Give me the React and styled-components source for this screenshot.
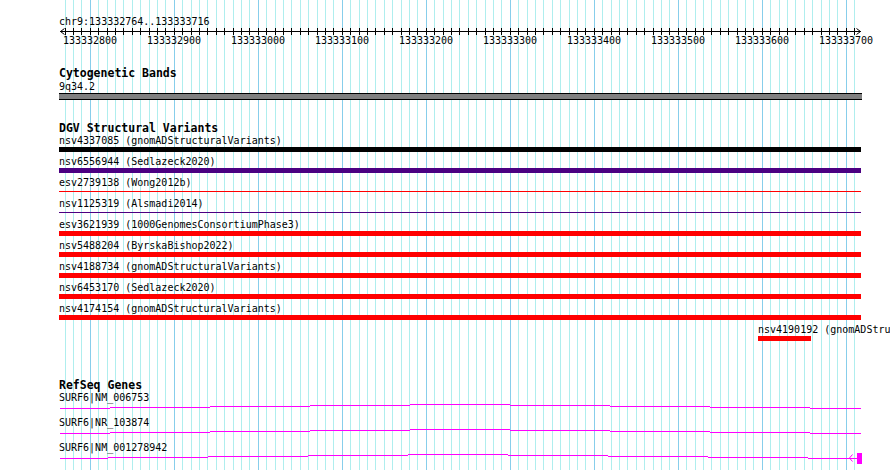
import React from 'react';
import styled, { createGlobalStyle } from 'styled-components';

const GlobalStyle = createGlobalStyle`
  html, body {
    margin: 0;
    padding: 0;
    background: #fff;
  }
  body {
    font-family: "DejaVu Sans Mono", "Liberation Mono", monospace;
    color: #000;
  }
`;

// view window and scale (px per bp)
const VIEW_START = 133332764;
const VIEW_END = 133333716;
const LEFT = 60;
const SCALE = 0.84;
const MIN_X = 59;
const MAX_X = 861;

const toX = (bp) => LEFT + (bp - VIEW_START) * SCALE;
const clampX = (x) => Math.min(MAX_X, Math.max(MIN_X, x));

const gridPositions = [];
for (let p = Math.ceil(VIEW_START / 10) * 10; p <= VIEW_END; p += 10) {
  gridPositions.push({ pos: p, x: Math.floor(toX(p)), major: p % 100 === 0 });
}

const variants = [
  { id: 'nsv4337085', source: 'gnomADStructuralVariants', color: '#000000' },
  { id: 'nsv6556944', source: 'Sedlazeck2020', color: '#4b0082' },
  { id: 'esv2739138', source: 'Wong2012b', color: '#ff0000', thin: true },
  { id: 'nsv1125319', source: 'Alsmadi2014', color: '#4b0082', thin: true },
  { id: 'esv3621939', source: '1000GenomesConsortiumPhase3', color: '#ff0000' },
  { id: 'nsv5488204', source: 'ByrskaBishop2022', color: '#ff0000' },
  { id: 'nsv4188734', source: 'gnomADStructuralVariants', color: '#ff0000' },
  { id: 'nsv6453170', source: 'Sedlazeck2020', color: '#ff0000' },
  { id: 'nsv4174154', source: 'gnomADStructuralVariants', color: '#ff0000' },
  { id: 'nsv4190192', source: 'gnomADStructuralVariants', color: '#ff0000', start: 133333595, end: 133333658 },
];

const genes = [
  { name: 'SURF6|NM_006753', shift: 0 },
  { name: 'SURF6|NR_103874', shift: 0 },
  { name: 'SURF6|NM_001278942', shift: -2, exon: true },
];

const Page = styled.div`
  position: relative;
  width: 890px;
  height: 470px;
  overflow: hidden;
  background: #fff;
`;

const GridLayer = styled.svg`
  position: absolute;
  top: 0;
  left: 0;
  z-index: 0;
`;

const Tracks = styled.div`
  position: relative;
  z-index: 1;
  padding-top: 16px;
`;

const Text = styled.div`
  font-size: 10px;
  line-height: 12px;
  height: 12px;
  white-space: nowrap;
  padding-left: ${(p) => p.$left ?? 59}px;
`;

const TrackTitle = styled.div`
  font-size: 11.5px;
  font-weight: bold;
  line-height: 12px;
  height: 12px;
  padding-left: 59px;
  white-space: nowrap;
  margin-top: ${(p) => p.$top}px;
  margin-bottom: ${(p) => p.$bottom}px;
`;

const Drawing = styled.svg`
  display: block;
  overflow: visible;
`;

const BandBar = styled.div`
  height: 5px;
  background: #808080;
  border-top: 1px solid #000;
  border-bottom: 1px solid #000;
`;

const VariantRow = styled.div`
  height: 21px;
`;

const Bar = styled.div`
  height: ${(p) => (p.$thin ? 1 : 5)}px;
  margin-top: ${(p) => (p.$thin ? 2 : 0)}px;
  background: ${(p) => p.$color};
`;

const GeneRow = styled.div`
  height: 25px;
`;

function Grid() {
  return (
    <GridLayer width="890" height="470" shapeRendering="crispEdges">
      {gridPositions.map((g) => (
        <line
          key={g.pos}
          x1={g.x + 0.5}
          x2={g.x + 0.5}
          y1="0"
          y2="470"
          stroke={g.major ? '#87ceeb' : '#afeeee'}
          strokeWidth="1"
        />
      ))}
    </GridLayer>
  );
}

function Ruler() {
  return (
    <Drawing width="890" height="18">
      <g shapeRendering="crispEdges" stroke="#000" strokeWidth="1">
        <line x1="60" x2="861" y1="3.5" y2="3.5" />
        {gridPositions.map((g) => (
          <line key={g.pos} x1={g.x + 0.5} x2={g.x + 0.5} y1="0" y2="7" />
        ))}
      </g>
      <g stroke="#000" strokeWidth="1" fill="none">
        <polyline points="64.5,0.5 60.5,3.5 64.5,6.5" />
        <polyline points="856.5,0.5 860.5,3.5 856.5,6.5" />
      </g>
      {gridPositions
        .filter((g) => g.major)
        .map((g) => (
          <text
            key={g.pos}
            x={g.x}
            y="16"
            textAnchor="middle"
            fontFamily='"DejaVu Sans Mono", monospace'
            fontSize="10"
            fill="#000"
          >
            {g.pos}
          </text>
        ))}
    </Drawing>
  );
}

// intron drawn as a shallow hat, peaking in the middle of the view
function intronPath(shift, endX) {
  const breaks = [60, 110, 210, 310, 410, 510, 610, 710, 810, endX];
  let d = '';
  for (let i = 0; i < breaks.length - 1; i++) {
    const x0 = i === 0 ? breaks[i] : breaks[i] + shift;
    const x1 = i === breaks.length - 2 ? breaks[i + 1] : breaks[i + 1] + shift;
    const dy = Math.round(Math.abs((breaks[i] + breaks[i + 1]) / 2 - 460) / 100);
    d += `M${x0} ${dy + 0.5}H${x1}`;
  }
  return d;
}

function Gene({ gene }) {
  return (
    <GeneRow>
      <Text>{gene.name}</Text>
      <Drawing width="890" height="13">
        <path
          d={intronPath(gene.shift, gene.exon ? 857 : 861)}
          stroke="#ff00ff"
          strokeWidth="1"
          fill="none"
          shapeRendering="crispEdges"
        />
        {gene.exon && (
          <>
            <polyline points="852.5,0.5 849.5,4 852.5,7.5" stroke="#ff00ff" strokeWidth="1" fill="none" />
            <rect x="857" y="-1" width="5" height="11" fill="#ff00ff" />
          </>
        )}
      </Drawing>
    </GeneRow>
  );
}

function Variant({ v }) {
  const x0 = clampX(v.start ? toX(v.start) : MIN_X);
  const x1 = clampX(v.end ? toX(v.end) : MAX_X);
  return (
    <VariantRow>
      <Text $left={Math.round(x0)}>
        {v.id} ({v.source})
      </Text>
      <Bar $color={v.color} $thin={v.thin} style={{ marginLeft: Math.round(x0), width: Math.round(x1 - x0) }} />
    </VariantRow>
  );
}

export default function App() {
  return (
    <>
      <GlobalStyle />
      <Page>
        <Grid />
        <Tracks>
          <Text $left={59}>chr9:133332764..133333716</Text>
          <Ruler />

          <TrackTitle $top={21} $bottom={2}>Cytogenetic Bands</TrackTitle>
          <Text>9q34.2</Text>
          <BandBar style={{ marginLeft: MIN_X, width: MAX_X - MIN_X + 1 }} />

          <TrackTitle $top={22} $bottom={1}>DGV Structural Variants</TrackTitle>
          {variants.map((v) => (
            <Variant key={v.id} v={v} />
          ))}

          <TrackTitle $top={34} $bottom={1}>RefSeq Genes</TrackTitle>
          {genes.map((g) => (
            <Gene key={g.name} gene={g} />
          ))}
        </Tracks>
      </Page>
    </>
  );
}
